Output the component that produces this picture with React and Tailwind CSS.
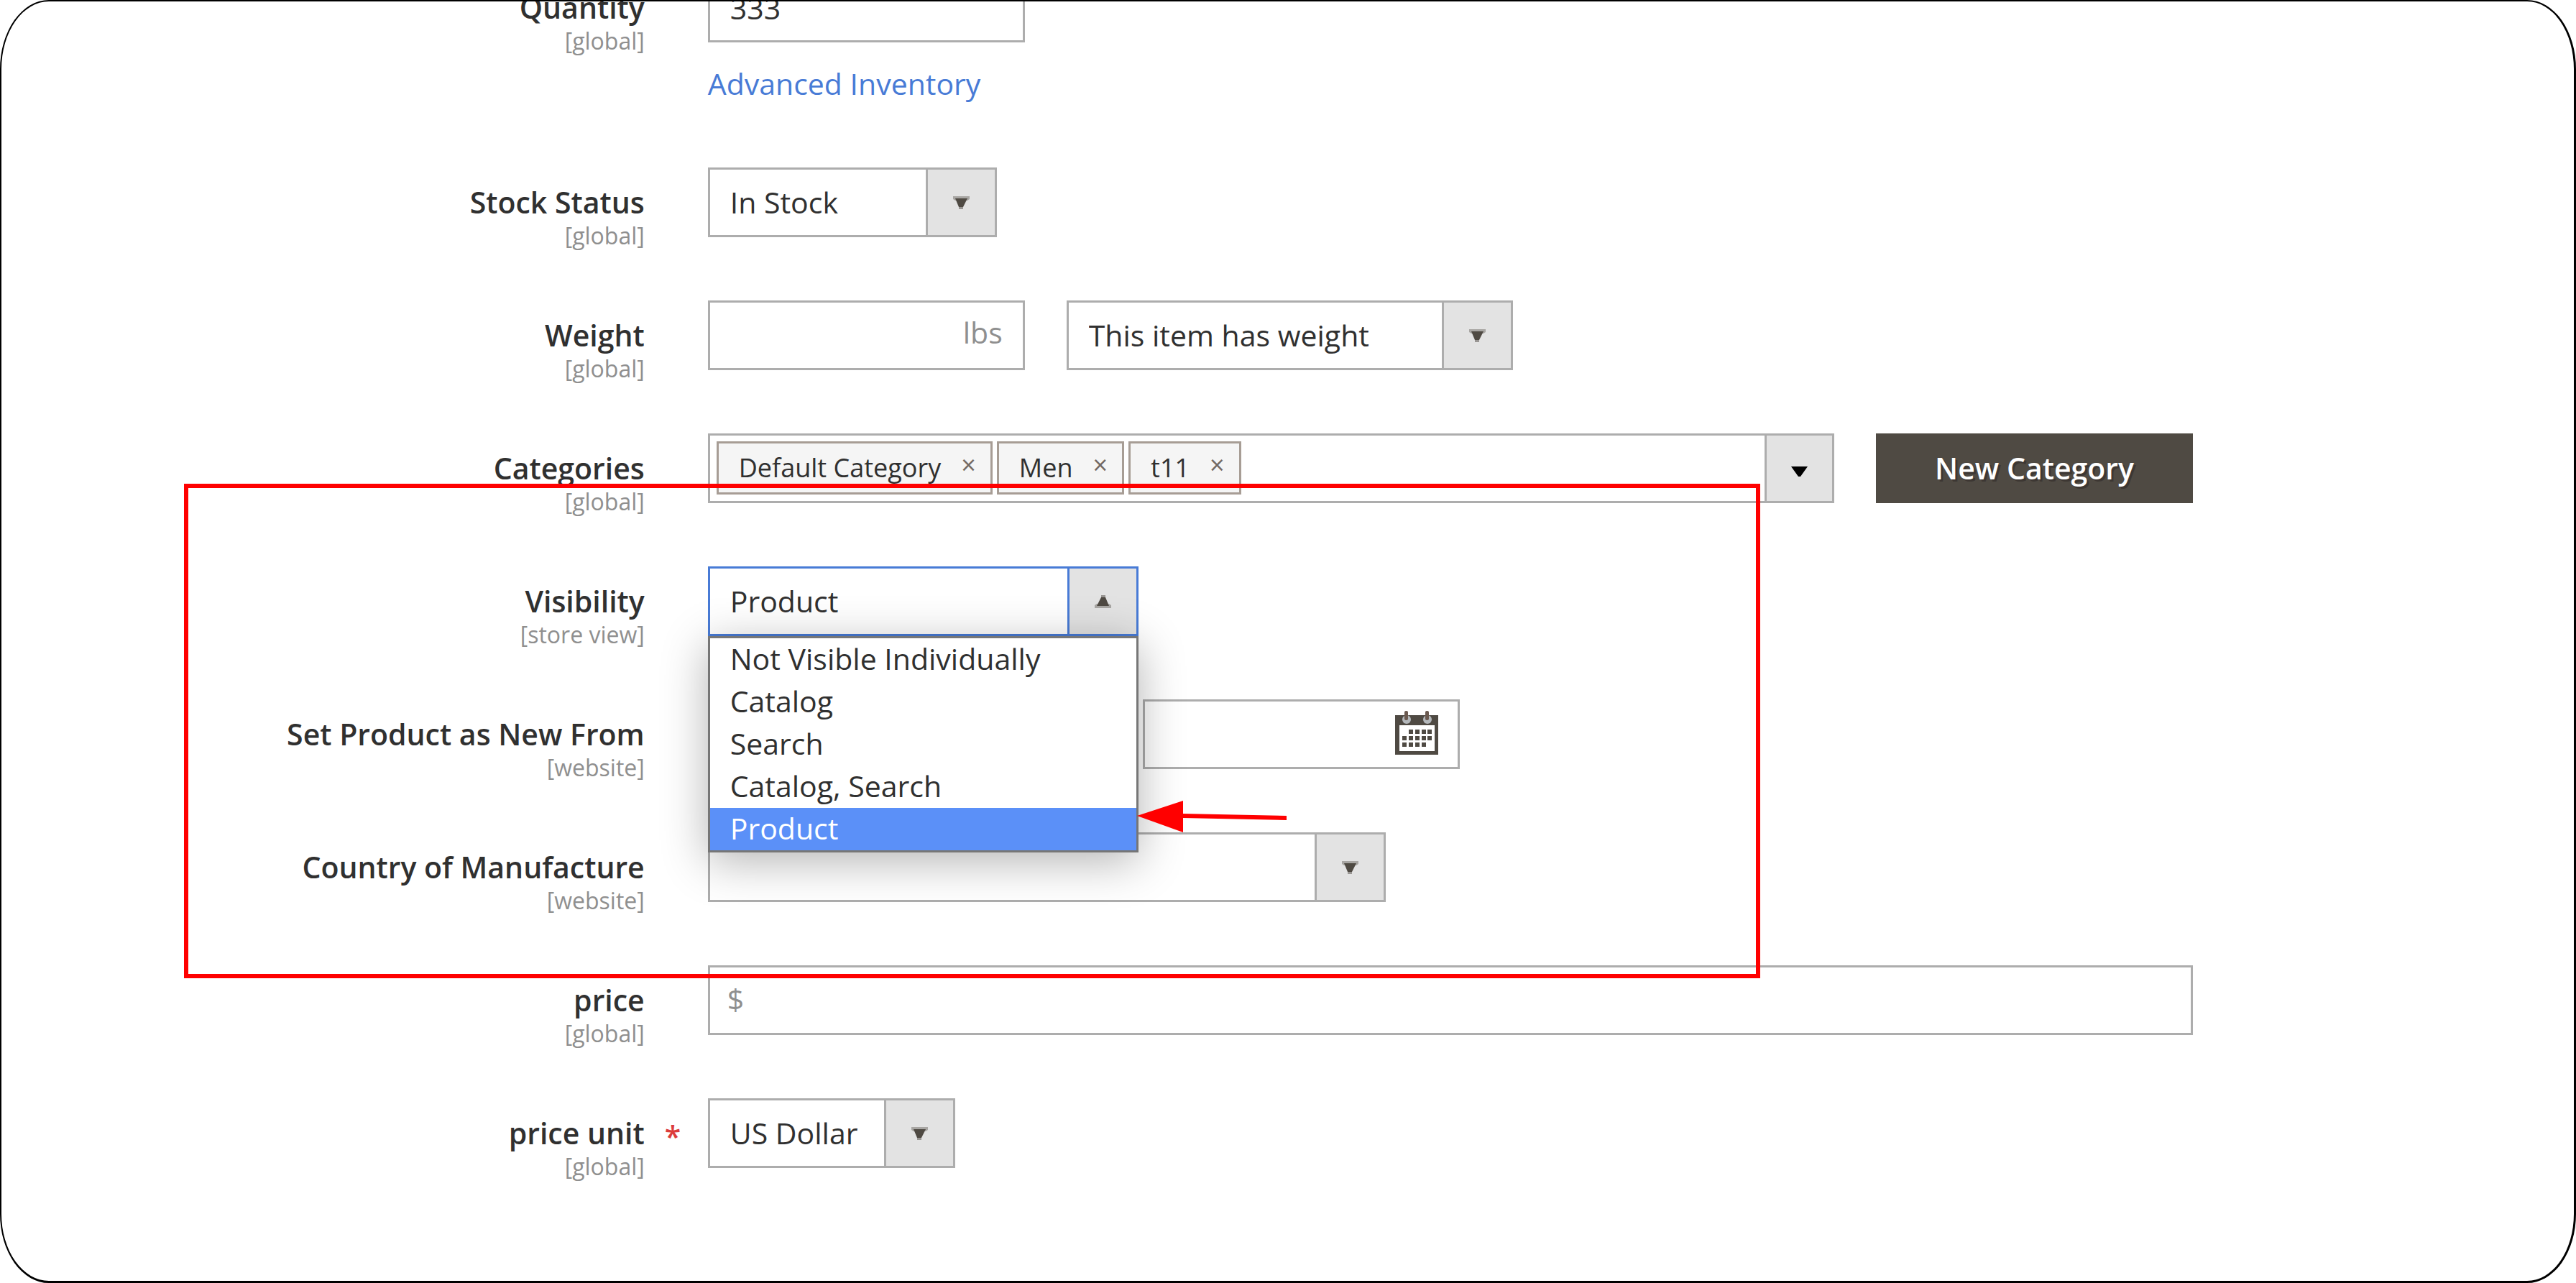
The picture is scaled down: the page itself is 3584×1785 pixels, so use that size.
import { useState } from 'react';

const visibilityOptions = [
  'Not Visible Individually',
  'Catalog',
  'Search',
  'Catalog, Search',
  'Product',
];

const Caret = ({ up }) => (
  <svg
    width="23"
    height="18"
    viewBox="0 0 23 18"
    className={`text-[#4f4a43] ${up ? 'rotate-180' : ''}`}
    aria-hidden="true"
  >
    <path d="M0 0h23v4l-3 2h-17l-3-2z" fill="currentColor" opacity="0.4" />
    <path d="M3 3h17L14 15h-6z" fill="currentColor" />
    <path d="M8 15h6v3h-6z" fill="currentColor" opacity="0.5" />
  </svg>
);

const CalendarIcon = () => (
  <svg width="65" height="61" viewBox="0 0 65 61" aria-hidden="true">
    <path
      d="M2 6h60v55H2zM8 20v36h49V20z"
      fill="#4f4a43"
      fillRule="evenodd"
    />
    <circle cx="18" cy="12" r="6" fill="#b4b8bb" />
    <circle cx="47" cy="12" r="6" fill="#b4b8bb" />
    <rect x="15" y="0" width="5" height="13" rx="2" fill="#6b5a50" />
    <rect x="44" y="0" width="5" height="13" rx="2" fill="#6b5a50" />
    <path
      d="M21 26h6v6h-6zM30 26h6v6h-6zM39 26h6v6h-6zM47 26h6v6h-6zM12 35h6v6h-6zM21 35h6v6h-6zM30 35h6v6h-6zM39 35h6v6h-6zM47 35h6v6h-6zM12 44h6v6h-6zM21 44h6v6h-6zM30 44h6v6h-6zM39 44h6v6h-6z"
      fill="#4f4a43"
    />
  </svg>
);

const Field = ({ id, label, scope, required, children }) => (
  <div className="flex items-start">
    <div className="w-1/4 shrink-0 pt-[19px] text-right">
      <label htmlFor={id} className="block font-semibold leading-[58px]">
        {label}
      </label>
      <p className="text-[32px] leading-9 text-[#8f8f8f]">{scope}</p>
    </div>
    <div className="w-[88px] shrink-0 pt-[23px] pl-7 font-semibold leading-[58px] text-[#dc3c3c]">
      {required && '*'}
    </div>
    <div className="min-w-0 flex-1 pr-[530px]">{children}</div>
  </div>
);

const Select = ({ id, options, width, active, ...props }) => (
  <div className={`relative h-[97px] ${width}`}>
    <select
      id={id}
      className={`size-full appearance-none rounded-none border-[3px] bg-white pl-7 outline-none ${
        active ? 'border-[#487bd6]' : 'border-[#adadad]'
      }`}
      {...props}
    >
      {options.map((option) => (
        <option key={option}>{option}</option>
      ))}
    </select>
    <span
      className={`pointer-events-none absolute inset-y-0 right-0 flex w-[99px] items-center justify-center border-[3px] bg-[#e3e3e3] ${
        active ? 'border-[#487bd6]' : 'border-[#adadad]'
      }`}
    >
      <Caret up={active} />
    </span>
  </div>
);

const Tag = ({ name, onRemove }) => (
  <span className="flex h-[74px] items-center border-[3px] border-[#a79d95] bg-[#f5f5f5] pr-5 pl-7 text-[36px]">
    {name}
    <button
      type="button"
      aria-label={`Remove ${name}`}
      onClick={onRemove}
      className="pb-2 pl-7 leading-none text-[#736963]"
    >
      ×
    </button>
  </span>
);

const App = () => {
  const [quantity, setQuantity] = useState('333');
  const [visibility, setVisibility] = useState('Product');
  const [categories, setCategories] = useState([
    'Default Category',
    'Men',
    't11',
  ]);

  const inputStyle =
    'h-[97px] border-[3px] border-[#adadad] bg-white outline-none';

  return (
    <main className="relative min-h-screen overflow-hidden rounded-[68px/96px] border-2 border-r-3 border-b-3 border-black bg-white font-['Open_Sans',sans-serif] text-[41px] text-[#303030]">
      <form className="-mt-10 flex flex-col gap-[72px]">
        <Field id="quantity" label="Quantity" scope="[global]">
          <input
            id="quantity"
            value={quantity}
            onChange={(e) => setQuantity(e.target.value)}
            className={`${inputStyle} block w-[441px] px-7`}
          />
          <a
            href="#advanced-inventory"
            className="mt-7 mb-4 block w-fit leading-[58px] text-[#487bd6]"
          >
            Advanced Inventory
          </a>
        </Field>

        <Field id="stock" label="Stock Status" scope="[global]">
          <Select
            id="stock"
            width="w-[402px]"
            options={['In Stock', 'Out of Stock']}
          />
        </Field>

        <Field id="weight" label="Weight" scope="[global]">
          <div className="flex gap-[58px]">
            <div className={`${inputStyle} flex w-[441px] items-center px-7`}>
              <input id="weight" className="min-w-0 flex-1 outline-none" />
              <span className="pb-2 text-[#8f8f8f]">lbs</span>
            </div>
            <Select
              id="has-weight"
              aria-label="Item weight"
              width="w-[621px]"
              options={['This item has weight', 'This item has no weight']}
            />
          </div>
        </Field>

        <Field id="categories" label="Categories" scope="[global]">
          <div className="flex gap-[58px]">
            <div className="flex h-[97px] flex-1 border-[3px] border-[#adadad]">
              <div className="flex flex-1 items-start gap-[6px] pt-2 pl-[9px]">
                {categories.map((name) => (
                  <Tag
                    key={name}
                    name={name}
                    onRemove={() =>
                      setCategories(categories.filter((c) => c !== name))
                    }
                  />
                ))}
              </div>
              <button
                id="categories"
                type="button"
                aria-label="Categories"
                className="flex w-[94px] items-center justify-center border-l-[3px] border-[#adadad] bg-[#e3e3e3] pt-2"
              >
                <svg width="23" height="14" viewBox="0 0 23 14">
                  <path d="M0 0h23L13 14h-3z" fill="#000" />
                </svg>
              </button>
            </div>
            <button
              type="button"
              className="h-[97px] w-[441px] bg-[#4f4a43] font-semibold text-white [text-shadow:3px_3px_0_#3d3733]"
            >
              New Category
            </button>
          </div>
        </Field>

        <Field id="visibility" label="Visibility" scope="[store view]">
          <div className="relative w-[599px]">
            <Select
              id="visibility"
              width="w-full"
              active
              value={visibility}
              onChange={(e) => setVisibility(e.target.value)}
              options={visibilityOptions}
            />
            <ul
              role="listbox"
              aria-label="Visibility"
              className="absolute inset-x-0 top-full z-10 border-[3px] border-[#767676] bg-white shadow-[0_12px_60px_rgba(0,0,0,0.3)]"
            >
              {visibilityOptions.map((option) => (
                <li
                  key={option}
                  role="option"
                  aria-selected={option === visibility}
                  onClick={() => setVisibility(option)}
                  className={`pb-[2px] pl-7 leading-[57px] ${
                    option === visibility ? 'bg-[#5b90f8] text-white' : ''
                  }`}
                >
                  {option}
                </li>
              ))}
            </ul>
          </div>
        </Field>

        <Field id="new-from" label="Set Product as New From" scope="[website]">
          <div className="flex gap-[164px]">
            <input id="new-from" className={`${inputStyle} w-[441px] px-7`} />
            <div className={`${inputStyle} flex w-[441px] items-center pr-6 pl-7`}>
              <input
                aria-label="Set Product as New To"
                className="min-w-0 flex-1 outline-none"
              />
              <button type="button" aria-label="Open calendar" className="pb-1">
                <CalendarIcon />
              </button>
            </div>
          </div>
        </Field>

        <Field id="country" label="Country of Manufacture" scope="[website]">
          <Select id="country" width="w-[943px]" options={['']} />
        </Field>

        <Field id="price" label="price" scope="[global]">
          <div className={`${inputStyle} flex items-center px-6`}>
            <span className="pb-1 text-[#8f8f8f]">$</span>
            <input id="price" className="min-w-0 flex-1 pl-3 outline-none" />
          </div>
        </Field>

        <Field id="price-unit" label="price unit" scope="[global]" required>
          <Select
            id="price-unit"
            width="w-[344px]"
            options={['US Dollar', 'Euro']}
          />
        </Field>
      </form>

      {/* highlighted area and pointer to the selected option */}
      <div className="pointer-events-none absolute top-[671px] right-[1132px] left-[254px] z-20 h-[688px] border-[6px] border-[#f00]" />
      <svg
        width="208"
        height="44"
        viewBox="0 0 208 44"
        className="pointer-events-none absolute top-[1112px] left-[1580px] z-20"
        aria-hidden="true"
      >
        <path d="M0 21L64 0v18l144 3v6L64 24v20z" fill="#f00" />
      </svg>
    </main>
  );
};

export default App;
